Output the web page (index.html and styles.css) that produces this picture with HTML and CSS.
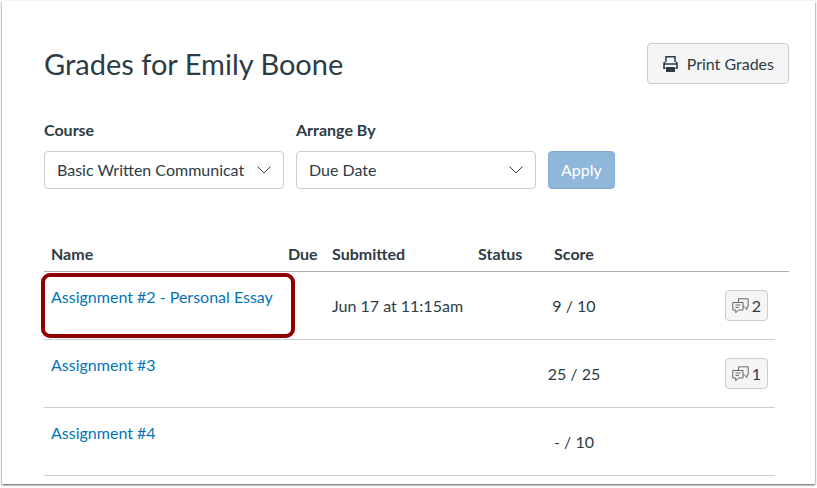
FILE: index.html
```html
<!DOCTYPE html>
<html lang="en">
<head>
    <meta charset="utf-8">
    <title>Grades for Emily Boone</title>
    <link rel="stylesheet" href="styles.css">
</head>
<body>
    <main class="page">
        <div class="header">
            <h1>Grades for Emily Boone</h1>
            <button type="button" class="btn print-btn">
                <svg class="print-icon" viewBox="0 0 15 16" aria-hidden="true">
                    <path d="M3 6V.8h9V6" fill="none" stroke="currentColor" stroke-width="1.500"/>
                    <path d="M2.500 12.300H1V7l1-1M12.500 12.300H14V7l-1-1M1 8h13" fill="none" stroke="currentColor" stroke-width="1.600"/>
                    <path d="M3 11h9v5H3z" fill="currentColor"/>
                </svg>
                Print Grades
            </button>
        </div>

        <form class="filters">
            <div class="field">
                <label for="course">Course</label>
                <div class="select-wrap">
                    <select id="course">
                        <option>Basic Written Communicat</option>
                    </select>
                    <svg class="chevron" viewBox="0 0 14 8" aria-hidden="true"><path d="M.5.5 7 7 13.500.5"/></svg>
                </div>
            </div>
            <div class="field">
                <label for="arrange">Arrange By</label>
                <div class="select-wrap">
                    <select id="arrange">
                        <option>Due Date</option>
                    </select>
                    <svg class="chevron" viewBox="0 0 14 8" aria-hidden="true"><path d="M.5.5 7 7 13.500.5"/></svg>
                </div>
            </div>
            <button type="button" class="apply-btn" disabled>Apply</button>
        </form>

        <table class="grades">
            <colgroup>
                <col class="col-name">
                <col class="col-due">
                <col class="col-submitted">
                <col class="col-status">
                <col class="col-score">
                <col>
                <col class="col-end">
            </colgroup>
            <thead>
                <tr>
                    <th scope="col">Name</th>
                    <th scope="col">Due</th>
                    <th scope="col">Submitted</th>
                    <th scope="col">Status</th>
                    <th scope="col" class="score">Score</th>
                    <td></td>
                    <td class="end"></td>
                </tr>
            </thead>
            <tbody>
                <tr>
                    <td class="name">
                        <a href="#">Assignment #2 - Personal Essay</a>
                        <span class="highlight"></span>
                    </td>
                    <td></td>
                    <td>Jun 17 at 11:15am</td>
                    <td></td>
                    <td class="score">9 / 10</td>
                    <td class="details">
                        <button type="button" class="btn comment-btn">
                            <svg class="comment-icon" viewBox="0 0 17 16" aria-hidden="true">
                                <path d="M6.500 4V.8h9.700v8H15v2.800l-2.800-2.800H11"/>
                                <path d="M.8 4.500h10.200v7.500H6.500l-2.700 2.800V12h-3zM3.500 7h5M3.500 9.400h3.500"/>
                            </svg>
                            2
                        </button>
                    </td>
                    <td class="end"></td>
                </tr>
                <tr>
                    <td class="name"><a href="#">Assignment #3</a></td>
                    <td></td>
                    <td></td>
                    <td></td>
                    <td class="score">25 / 25</td>
                    <td class="details">
                        <button type="button" class="btn comment-btn">
                            <svg class="comment-icon" viewBox="0 0 17 16" aria-hidden="true">
                                <path d="M6.500 4V.8h9.700v8H15v2.800l-2.800-2.800H11"/>
                                <path d="M.8 4.500h10.200v7.500H6.500l-2.700 2.800V12h-3zM3.500 7h5M3.500 9.400h3.500"/>
                            </svg>
                            1
                        </button>
                    </td>
                    <td class="end"></td>
                </tr>
                <tr>
                    <td class="name"><a href="#">Assignment #4</a></td>
                    <td></td>
                    <td></td>
                    <td></td>
                    <td class="score">- / 10</td>
                    <td></td>
                    <td class="end"></td>
                </tr>
            </tbody>
        </table>
    </main>
</body>
</html>
```

FILE: styles.css
```css
*{
    box-sizing: border-box;
}
body{
    margin: 0;
    padding: 1px 2px 3px;
    background-color: #fff;
    color: #2d3b45;
    font-family: Lato, "Liberation Sans", sans-serif;
    font-size: 16px;
    line-height: 24px;
}
button, select{
    font: inherit;
    color: inherit;
}
.page{
    padding: 42px 26px 8px 42px;
    background-color: #fff;
    box-shadow: 0 1px 2px rgba(0, 0, 0, 0.7);
}
.header{
    display: flex;
    justify-content: space-between;
    align-items: center;
}
h1{
    margin: 0;
    font-size: 29px;
    font-weight: 400;
    line-height: 40px;
}
.btn{
    display: inline-flex;
    align-items: center;
    background-color: #f5f5f5;
    border: 1px solid #c7cdd1;
    border-radius: 4px;
}
.print-btn{
    height: 41px;
    padding: 0 14px 0 15px;
    gap: 9px;
}
.print-icon{
    width: 15px;
    height: 16px;
}

/* filters */
.filters{
    display: flex;
    align-items: flex-end;
    gap: 12px;
    margin-top: 34px;
}
.field{
    width: 240px;
}
.field label{
    display: block;
    margin-bottom: 9px;
    font-weight: 700;
}
.select-wrap{
    position: relative;
}
select{
    appearance: none;
    display: block;
    width: 100%;
    height: 38px;
    padding: 0 36px 0 12px;
    background-color: #fff;
    border: 1px solid #c7cdd1;
    border-radius: 4px;
}
.chevron{
    position: absolute;
    top: 15px;
    right: 13px;
    width: 14px;
    height: 8px;
    fill: none;
    stroke: #2d3b45;
    pointer-events: none;
}
.apply-btn{
    height: 38px;
    padding: 0 12px;
    background-color: #8fb7da;
    border: 1px solid #84abce;
    border-radius: 4px;
    color: #fff;
}

/* grades table */
.grades{
    width: 100%;
    margin-top: 48px;
    table-layout: fixed;
    border-collapse: separate;
    border-spacing: 0;
}
.col-name{
    width: 237px;
}
.col-due{
    width: 44px;
}
.col-submitted{
    width: 146px;
}
.col-status{
    width: 59px;
}
.col-score{
    width: 88px;
}
.col-end{
    width: 14px;
}
.grades th, .grades td{
    padding: 0 7px;
    text-align: left;
    white-space: nowrap;
}
.grades thead th, .grades thead td{
    height: 35px;
    border-bottom: 1px solid #a5afb5;
}
.grades tbody td{
    height: 68px;
    border-bottom: 1px solid #c7cdd1;
}
.grades .end{
    padding: 0;
}
.grades tbody .end{
    border-bottom: none;
}
.grades .score{
    text-align: center;
}
.grades .name{
    position: relative;
    padding-top: 13px;
    vertical-align: top;
}
.name a{
    color: #0374b5;
    text-decoration: none;
}
.grades .details{
    text-align: right;
}
.comment-btn{
    height: 31px;
    padding: 0 6px;
    gap: 3px;
    vertical-align: middle;
}
.comment-icon{
    width: 17px;
    height: 16px;
    fill: none;
    stroke: #666;
}
.highlight{
    position: absolute;
    top: 1px;
    right: -14px;
    bottom: 1px;
    left: -3px;
    border: 4px solid #910000;
    border-radius: 9px;
    pointer-events: none;
}
```
